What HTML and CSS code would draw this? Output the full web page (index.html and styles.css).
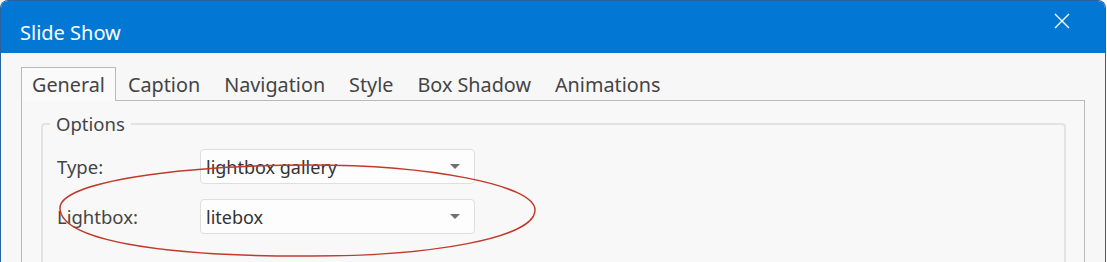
FILE: index.html
```html
<!DOCTYPE html>
<html>
<head>
    <title>Slide Show</title>
    <link rel="stylesheet" href="styles.css">
</head>
<body>
    <div class="window">
        <div class="titlebar">
            <span class="title">Slide Show</span>
            <button class="close" title="Close">
                <svg width="16" height="16" viewBox="0 0 16 16">
                    <path d="M1 1 L15 15 M15 1 L1 15" stroke="#fff" stroke-width="1.4" fill="none"/>
                </svg>
            </button>
        </div>
        <div class="content">
            <div class="tabs">
                <div class="tab active">General</div>
                <div class="tab">Caption</div>
                <div class="tab">Navigation</div>
                <div class="tab">Style</div>
                <div class="tab">Box Shadow</div>
                <div class="tab">Animations</div>
            </div>
            <div class="panel">
                <fieldset class="options">
                    <legend>Options</legend>
                    <div class="row">
                        <label>Type:</label>
                        <div class="select"><span>lightbox gallery</span><i class="arrow"></i></div>
                    </div>
                    <div class="row">
                        <label>Lightbox:</label>
                        <div class="select"><span>litebox</span><i class="arrow"></i></div>
                    </div>
                </fieldset>
            </div>
        </div>
        <!-- hand drawn highlight -->
        <svg class="mark" width="600" height="262" viewBox="0 0 600 262">
            <path d="M535,210 C535,238 430,257 300,256 C160,256 60,240 60,208 C60,182 180,165 310,165 C430,165 535,185 535,210 Z"
                  fill="none" stroke="#c23a2c" stroke-width="1.5"/>
        </svg>
    </div>
</body>
</html>
```

FILE: styles.css
```css
body {
    margin: 0;
    background: #fff;
    font-family: "Noto Sans", "Open Sans", sans-serif;
    color: #333;
}

.window {
    position: relative;
    width: 1104px;
    height: 300px;
    background: #f7f7f7;
    border: 1px solid #2a62a0;
    border-bottom: none;
    border-radius: 8px 8px 0 0;
    overflow: hidden;
}

.titlebar {
    height: 52px;
    background: #0278d4;
    display: flex;
    justify-content: space-between;
    align-items: flex-start;
}

.title {
    color: #fff;
    font-size: 20px;
    padding: 18px 0 0 19px;
}

.close {
    background: transparent;
    border: none;
    padding: 0;
    margin: 12px 35px 0 0;
    width: 16px;
    height: 16px;
    cursor: pointer;
}

.content {
    padding: 14px 20px 0 20px;
}

.tabs {
    display: flex;
    height: 33px;
    border-bottom: 1px solid #b9b9b9;
}

.tab {
    font-size: 19.8px;
    color: #444;
    padding: 3px 11px 0 11px;
    height: 30px;
    border: 1px solid transparent;
    border-bottom: none;
}

.tab.active {
    background: #fafafa;
    border-color: #b9b9b9;
    padding-left: 10px;
    padding-right: 10px;
}

.panel {
    border-left: 1px solid #b9b9b9;
    border-right: 1px solid #b9b9b9;
    background: #f8f8f8;
    height: 200px;
    padding: 10px 18px 0 19px;
}

.options {
    margin: 0;
    border: 2px solid #e3e3e3;
    border-radius: 4px;
    padding: 13px 14px 20px 14px;
}

.options legend {
    font-size: 18.5px;
    color: #444;
    padding: 0 6px;
    margin-left: -7px;
}

.row {
    display: flex;
    align-items: center;
    margin-bottom: 15px;
}

.row label {
    width: 143px;
    font-size: 18.5px;
    color: #444;
}

.select {
    height: 33px;
    border: 1px solid #dedede;
    border-radius: 4px;
    background: #fdfdfd;
    display: flex;
    align-items: center;
    justify-content: space-between;
    padding: 0 14px 0 5px;
    width: 254px;
    font-size: 18px;
    color: #333;
}

.arrow {
    width: 0;
    height: 0;
    border-left: 5px solid transparent;
    border-right: 5px solid transparent;
    border-top: 5px solid #707070;
}

.mark {
    position: absolute;
    left: -1px;
    top: -1px;
    pointer-events: none;
}
```
